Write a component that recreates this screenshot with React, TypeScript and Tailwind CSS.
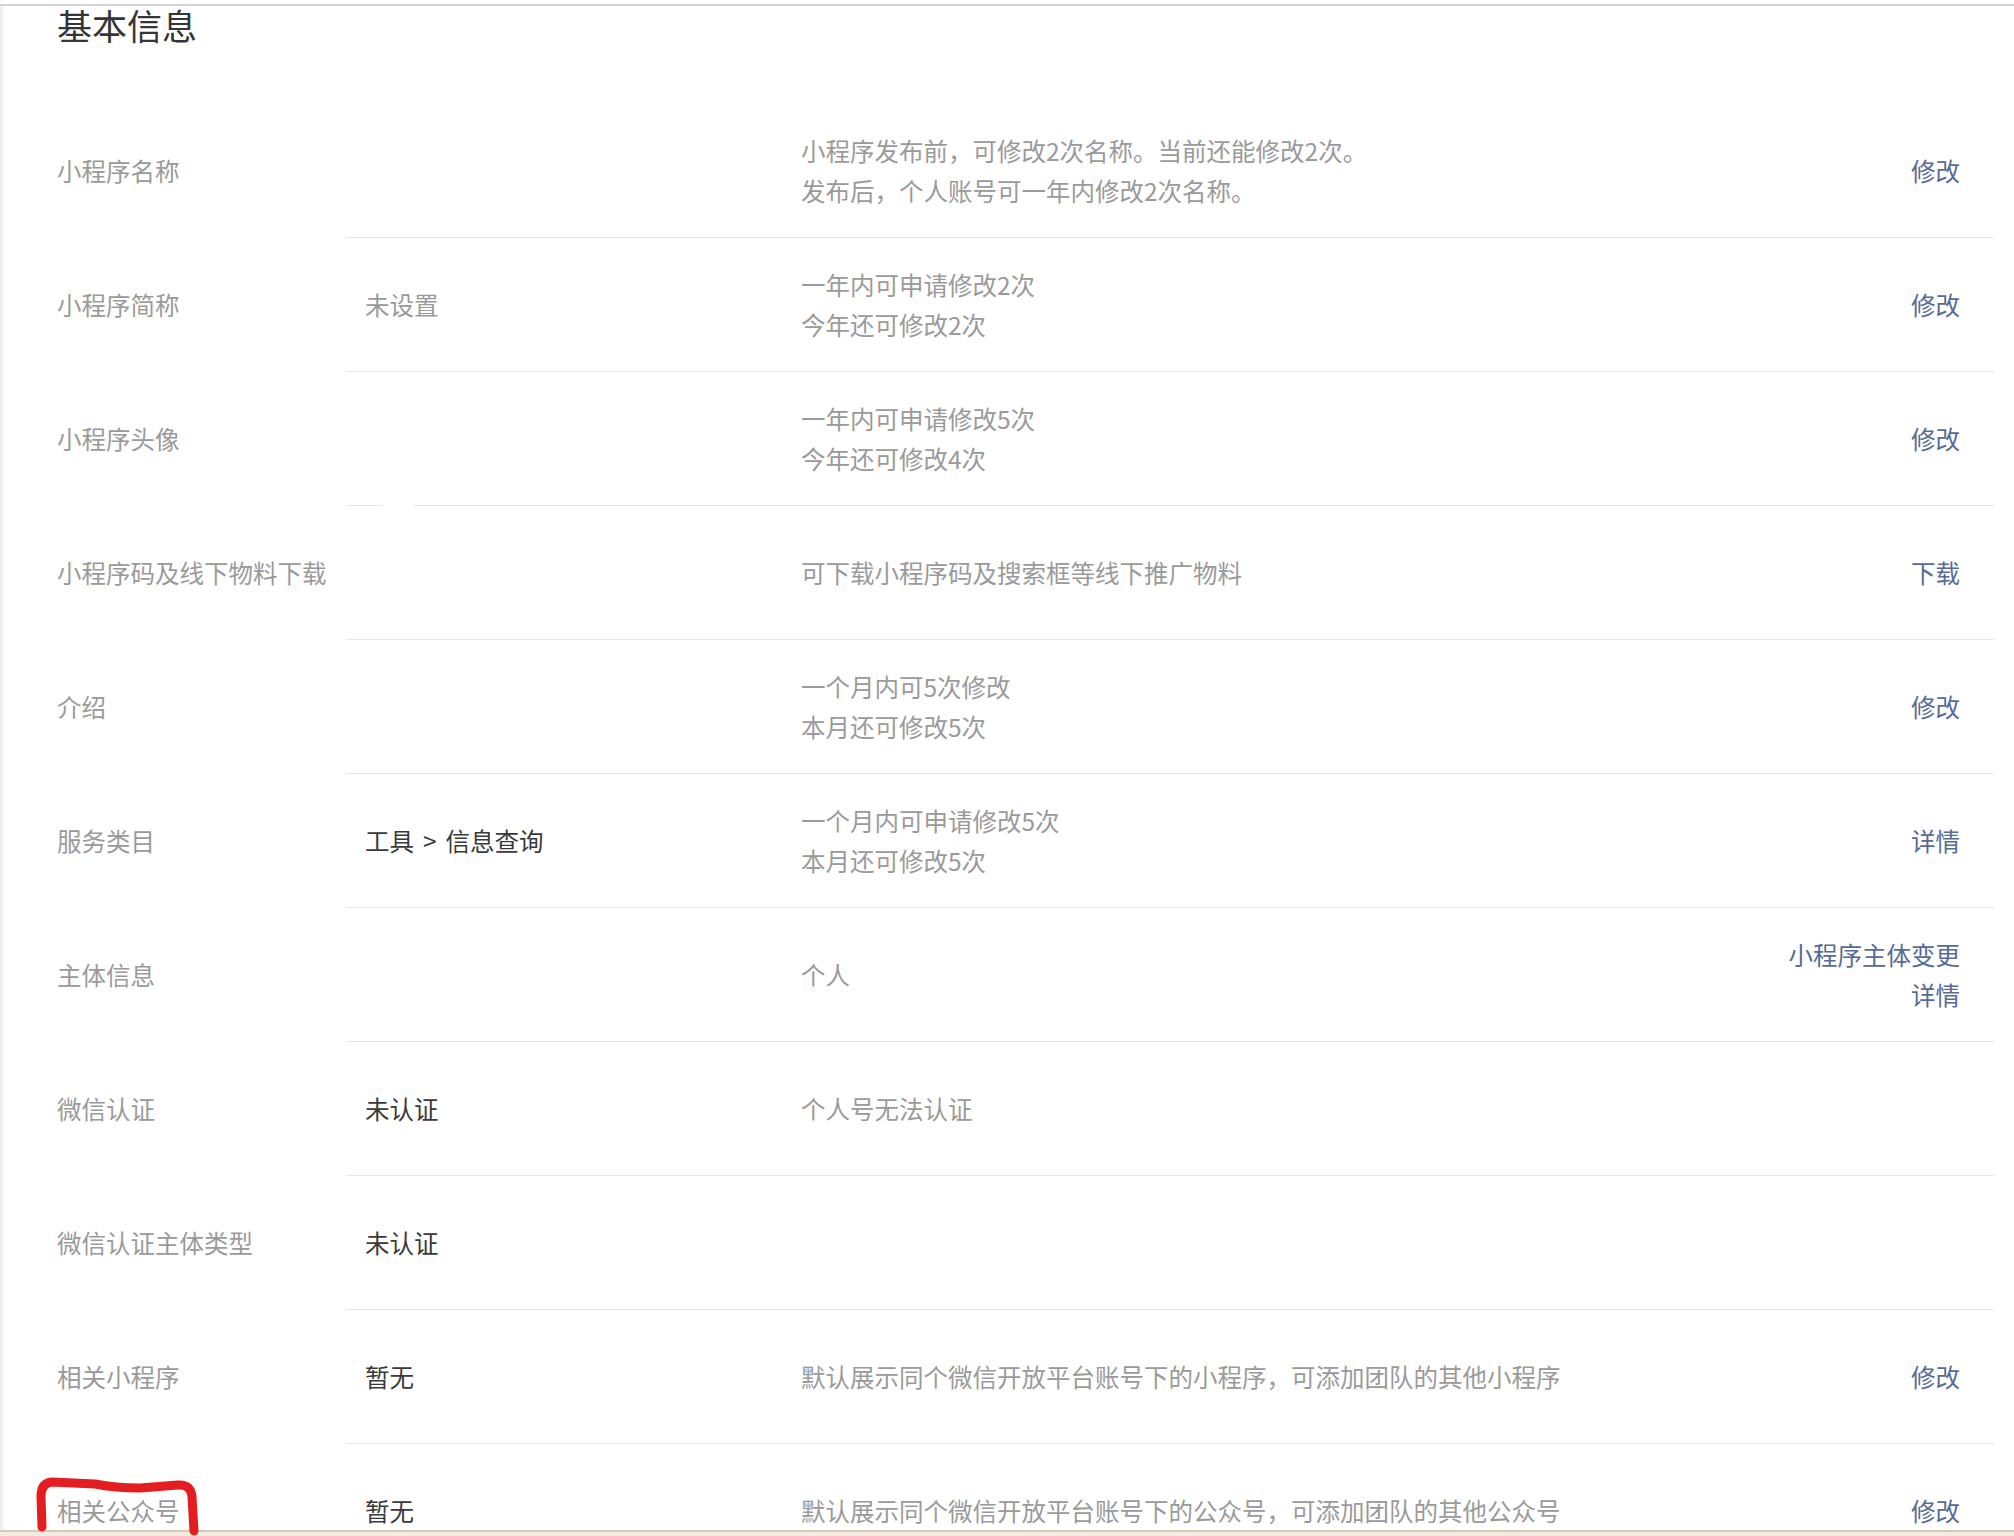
import React from 'react'

type Row = {
  label: string
  value?: React.ReactNode
  muted?: boolean
  desc?: string[]
  actions?: string[]
  avatar?: boolean
}

const ROWS: Row[] = [
  {
    label: '小程序名称',
    desc: ['小程序发布前，可修改2次名称。当前还能修改2次。', '发布后，个人账号可一年内修改2次名称。'],
    actions: ['修改'],
  },
  {
    label: '小程序简称',
    value: '未设置',
    muted: true,
    desc: ['一年内可申请修改2次', '今年还可修改2次'],
    actions: ['修改'],
  },
  {
    label: '小程序头像',
    avatar: true,
    desc: ['一年内可申请修改5次', '今年还可修改4次'],
    actions: ['修改'],
  },
  {
    label: '小程序码及线下物料下载',
    desc: ['可下载小程序码及搜索框等线下推广物料'],
    actions: ['下载'],
  },
  {
    label: '介绍',
    desc: ['一个月内可5次修改', '本月还可修改5次'],
    actions: ['修改'],
  },
  {
    label: '服务类目',
    value: (
      <>
        工具<span className="px-[9px]">&gt;</span>信息查询
      </>
    ),
    desc: ['一个月内可申请修改5次', '本月还可修改5次'],
    actions: ['详情'],
  },
  {
    label: '主体信息',
    desc: ['个人'],
    actions: ['小程序主体变更', '详情'],
  },
  { label: '微信认证', value: '未认证', desc: ['个人号无法认证'] },
  { label: '微信认证主体类型', value: '未认证' },
  {
    label: '相关小程序',
    value: '暂无',
    desc: ['默认展示同个微信开放平台账号下的小程序，可添加团队的其他小程序'],
    actions: ['修改'],
  },
  {
    label: '相关公众号',
    value: '暂无',
    desc: ['默认展示同个微信开放平台账号下的公众号，可添加团队的其他公众号'],
    actions: ['修改'],
  },
]

function InfoRow({ row }: { row: Row }) {
  return (
    <div className="flex h-[134px] shrink-0">
      <div className="w-[290px] shrink-0 flex items-center text-[#9a9a9a]">{row.label}</div>
      <div className="relative flex-1 flex items-center border-b border-[#e7e7e7]">
        {/* value */}
        <div className={`w-[454px] shrink-0 pl-[18px] ${row.muted ? 'text-[#9a9a9a]' : 'text-[#3a3a3a]'}`}>
          {row.value}
        </div>
        {/* desc */}
        <div className="flex-1 text-[#9a9a9a] leading-[40px]">
          {row.desc?.map((line) => (
            <p key={line}>{line}</p>
          ))}
        </div>
        {/* actions */}
        <div className="pr-[34px] text-right text-[#576b95] leading-[40px]">
          {row.actions?.map((a) => (
            <p key={a}>{a}</p>
          ))}
        </div>
        {row.avatar && <span className="absolute left-[36px] bottom-[-1px] w-[30px] h-[3px] bg-white" />}
      </div>
    </div>
  )
}

export default function App() {
  return (
    <div
      className="relative w-[2014px] h-[1536px] overflow-hidden bg-white flex flex-col text-[24.5px] leading-[40px]"
      style={{ fontFamily: '"Noto Sans CJK SC", "Noto Sans", sans-serif' }}
    >
      <div className="h-[4px] shrink-0 bg-white" />
      <div className="h-[2px] shrink-0 bg-[#d2d2d2]" />

      <div className="flex-1 min-h-0 overflow-hidden border-l-[3px] border-[#eef0f2] pl-[54px] pr-[20px] flex flex-col">
        {/* Heading */}
        <div className="h-[98px] shrink-0 pt-[1px]">
          <h2 className="text-[35px] leading-[36px] text-[#353535]">基本信息</h2>
        </div>

        {ROWS.map((row) => (
          <InfoRow key={row.label} row={row} />
        ))}
      </div>

      {/* bottom edge */}
      <div className="h-[2px] shrink-0 bg-[#d6c9b6]" />
      <div className="h-[4px] shrink-0 bg-[#f4ece1]" />

      {/* red hand-drawn mark */}
      <svg
        className="absolute left-0 top-0 pointer-events-none"
        width="2014"
        height="1536"
        viewBox="0 0 2014 1536"
        fill="none"
      >
        <path
          d="M42 1527 L41 1496 Q41 1483 52 1482 L95 1484 Q115 1488 140 1488 L178 1485 Q191 1484 192 1497 L194 1531"
          stroke="#e41e20"
          strokeWidth="9"
          strokeLinecap="round"
          strokeLinejoin="round"
        />
      </svg>
    </div>
  )
}
